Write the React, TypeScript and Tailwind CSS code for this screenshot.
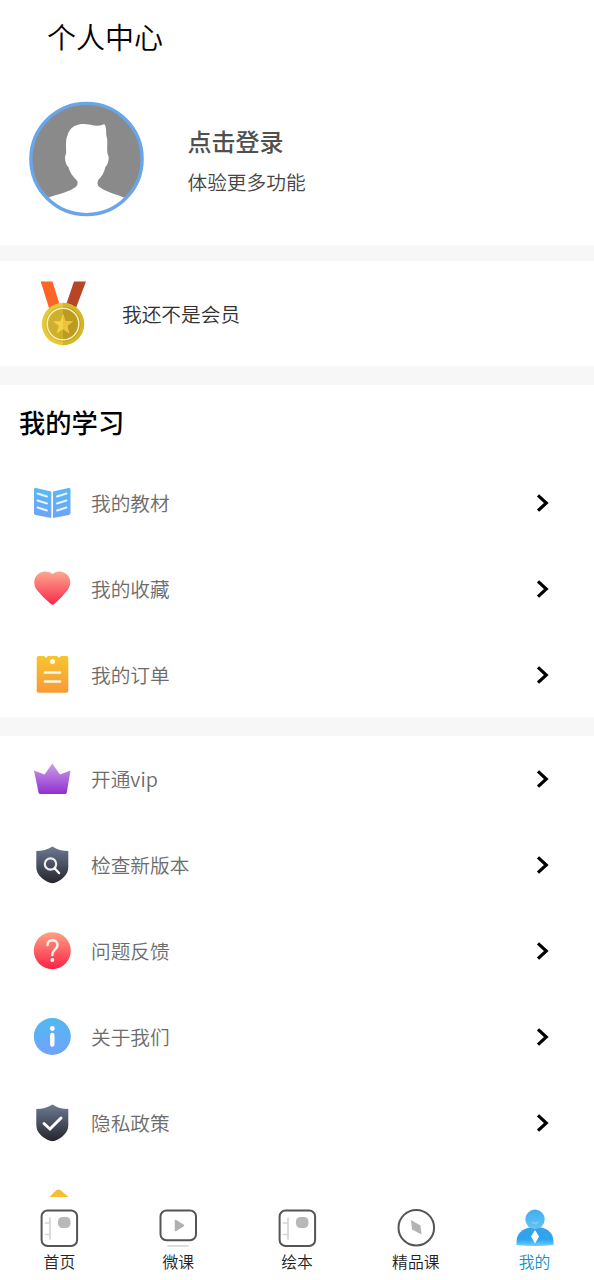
import React from 'react';

type IconComponent = React.FC;

interface MenuItem {
  label: string;
  icon: IconComponent;
}

interface TabItem extends MenuItem {
  active?: boolean;
}

const BookIcon: IconComponent = () => (
  <svg className="h-10 w-10" viewBox="0 0 40 40" fill="none">
    <defs>
      <linearGradient id="book" x1="0" y1="5" x2="0" y2="35" gradientUnits="userSpaceOnUse">
        <stop stopColor="#59b9f2" />
        <stop offset="1" stopColor="#6ea3f8" />
      </linearGradient>
    </defs>
    <path d="M2 6.500Q2 4.500 4 5L19.300 8.500V35L3.500 32Q2 31.600 2 30ZM21 8.500L36.500 5Q38.500 4.500 38.500 6.500V30Q38.500 31.600 37 32L21 35Z" fill="url(#book)" />
    <path d="M5.500 10.500l9.500 3M5.500 17.500l9.500 3M5.500 24.500l9.500 3M25 13.500l9.500-3M25 20.500l9.500-3M25 27.500l9.500-3" stroke="#fff" strokeOpacity=".85" strokeWidth="1.900" strokeLinecap="round" />
  </svg>
);

const HeartIcon: IconComponent = () => (
  <svg className="h-10 w-10" viewBox="0 0 40 40">
    <defs>
      <linearGradient id="heart" x1="0" y1="3" x2="0" y2="36" gradientUnits="userSpaceOnUse">
        <stop stopColor="#fba78f" />
        <stop offset="1" stopColor="#fb2649" />
      </linearGradient>
    </defs>
    <path d="M20.500 5C25 1.200 31.500 1.800 35.500 6C39.500 10.500 39 17 35 21.800Q30 28.500 22.500 34.800Q20.500 36.500 18.500 34.800Q11 28.500 5.500 21.800C1.500 17 1 10.500 5 6C9 1.800 16 1.200 20.500 5Z" fill="url(#heart)" />
  </svg>
);

const OrderIcon: IconComponent = () => (
  <svg className="h-10 w-10" viewBox="0 0 40 40" fill="none">
    <defs>
      <linearGradient id="order" x1="0" y1="1" x2="0" y2="38" gradientUnits="userSpaceOnUse">
        <stop stopColor="#f7c52e" />
        <stop offset="1" stopColor="#f79938" />
      </linearGradient>
    </defs>
    <path d="M6.500 1H12.500Q12.500 2.600 14 2.600T15.500 1H25.500Q25.500 2.600 27 2.600T28.500 1H34.500Q36.300 1 36.300 2.500V36Q36.300 37.700 34.500 37.700H6.500Q4.700 37.700 4.700 36V2.500Q4.700 1 6.500 1Z" fill="url(#order)" />
    <circle cx="20.500" cy="6.500" r="2.500" fill="#fff" fillOpacity=".9" />
    <path d="M13 17.500h15M13 26.500h15" stroke="#fff" strokeOpacity=".9" strokeWidth="2.700" strokeLinecap="round" />
  </svg>
);

const CrownIcon: IconComponent = () => (
  <svg className="h-10 w-10" viewBox="0 0 40 40">
    <defs>
      <linearGradient id="crown" x1="0" y1="5" x2="0" y2="35" gradientUnits="userSpaceOnUse">
        <stop stopColor="#cb9de6" />
        <stop offset="1" stopColor="#8f2fd0" />
      </linearGradient>
    </defs>
    <path d="M20.300 4.500L28 15.500L38.500 11.500L34.800 33.500Q34.500 35 33 35H8.500Q6.800 35 6.500 33.500L2 11.500L12.500 15.500Z" fill="url(#crown)" />
  </svg>
);

const ShieldShape: React.FC<{ id: string; children: React.ReactNode }> = ({ id, children }) => (
  <svg className="h-10 w-10" viewBox="0 0 40 40" fill="none">
    <defs>
      <linearGradient id={id} x1="0" y1="2" x2="0" y2="38" gradientUnits="userSpaceOnUse">
        <stop stopColor="#6c7991" />
        <stop offset="1" stopColor="#25262e" />
      </linearGradient>
    </defs>
    <path d="M20.500 1.500Q27 6 36.300 6V22.500C36.300 30 29 35.500 23 37.800Q20.500 38.500 18 37.800C11 35 4.300 30 4.300 22V6Q13 6 20.500 1.500Z" fill={`url(#${id})`} />
    {children}
  </svg>
);

const VersionIcon: IconComponent = () => (
  <ShieldShape id="shieldVersion">
    <circle cx="18.500" cy="19" r="5.700" stroke="#fff" strokeOpacity=".9" strokeWidth="2.200" />
    <path d="M22.800 23.500L27 28" stroke="#fff" strokeWidth="2.400" strokeLinecap="round" />
  </ShieldShape>
);

const PrivacyIcon: IconComponent = () => (
  <ShieldShape id="shieldPrivacy">
    <path d="M12 20.500L18 26L29 15" stroke="#fff" strokeWidth="3" strokeLinecap="round" />
  </ShieldShape>
);

const FeedbackIcon: IconComponent = () => (
  <svg className="h-10 w-10" viewBox="0 0 40 40" fill="none">
    <defs>
      <linearGradient id="feedback" x1="0" y1="1" x2="0" y2="38" gradientUnits="userSpaceOnUse">
        <stop stopColor="#fda384" />
        <stop offset="1" stopColor="#fc2247" />
      </linearGradient>
    </defs>
    <circle cx="20.300" cy="19.700" r="18.500" fill="url(#feedback)" />
    <path d="M15.500 14C15.500 7.800 25.500 7.800 25.500 14C25.500 18.500 20.300 18.500 20.300 24" stroke="#fff" strokeOpacity=".9" strokeWidth="2.500" strokeLinecap="round" />
    <circle cx="20.300" cy="29" r="1.900" fill="#fff" />
  </svg>
);

const AboutIcon: IconComponent = () => (
  <svg className="h-10 w-10" viewBox="0 0 40 40" fill="none">
    <defs>
      <linearGradient id="about" x1="0" y1="1" x2="0" y2="38" gradientUnits="userSpaceOnUse">
        <stop stopColor="#50b9f0" />
        <stop offset="1" stopColor="#71a2fb" />
      </linearGradient>
    </defs>
    <circle cx="20.300" cy="19.500" r="18.500" fill="url(#about)" />
    <circle cx="20.300" cy="11.500" r="2.400" fill="#fff" />
    <path d="M20.300 18V27.500" stroke="#fff" strokeWidth="4.400" strokeLinecap="round" />
  </svg>
);

const Avatar: IconComponent = () => (
  <svg className="h-[116px] w-[116px]" viewBox="0 0 116 116">
    <defs>
      <clipPath id="avatarClip">
        <circle cx="58.500" cy="58" r="56" />
      </clipPath>
    </defs>
    <g clipPath="url(#avatarClip)">
      <rect width="116" height="116" fill="#8a8a8a" />
      <path d="M51 23.500C60 21.500 66 26.500 74 24C75.500 23.300 76.500 22.500 77 24C79 29 77.500 33 79 37C79.800 42 78.500 49 79.700 53.500C82 56 80 64 77.300 66C76.500 71 73.500 76 70.500 78.500C68 83 70.500 86 73 87C80 92 89 93 97 97V116H19V97C29 93 39 92 46 87C49 86 51 82 48.500 79C45 76 41 70 40.500 66C37.500 64 36 56 38 53C38.500 47 37 39 39.700 34C41 29 44 25 51 23.500Z" fill="#fff" />
    </g>
    <circle cx="58.500" cy="58" r="55.600" fill="none" stroke="#6aa5ea" strokeWidth="3.400" />
  </svg>
);

const Medal: IconComponent = () => (
  <svg className="h-[68px] w-[50px]" viewBox="0 0 50 68">
    <path d="M2.700 1.500H14.500L22 26L11 28Z" fill="#fc6528" />
    <path d="M36 1.500H48L38 28L28 25Z" fill="#b74627" />
    <circle cx="25" cy="44" r="21.200" fill="#e8c935" />
    <path d="M25 22.800A21.200 21.200 0 0 1 25 65.200Z" fill="#d5b52a" />
    <circle cx="25" cy="44" r="17.500" fill="#cfb02c" />
    <path d="M25 26.500A17.500 17.500 0 0 1 25 61.500Z" fill="#bb9c21" />
    <circle cx="25" cy="44" r="15.800" fill="none" stroke="#f6efbd" strokeWidth="1.500" />
    <path d="M25 34L27.600 41.300H35L29.200 46L31.400 53.500L25 49L18.600 53.500L20.800 46L15 41.300H22.400Z" fill="#f7d246" />
    <path d="M25 34L27.600 41.300H35L29.200 46L31.400 53.500L25 49Z" fill="#ebc341" />
  </svg>
);

const NotebookTabIcon: IconComponent = () => (
  <svg className="h-10 w-10" viewBox="0 0 40 40" fill="none">
    <rect x="2.600" y="2.500" width="35.500" height="35.500" rx="6" stroke="#555" strokeWidth="2" />
    <path d="M11 10V31M6.500 15H11M6.500 26.500H11" stroke="#d5d5d5" strokeWidth="1.700" strokeLinecap="round" />
    <rect x="19" y="9" width="12.500" height="11" rx="4.500" fill="#b8b8b8" />
  </svg>
);

const VideoTabIcon: IconComponent = () => (
  <svg className="h-10 w-10" viewBox="0 0 40 40" fill="none">
    <rect x="2.500" y="2.500" width="35.500" height="29.800" rx="6" stroke="#555" strokeWidth="2" />
    <path d="M17.500 12.500V22.500L25.500 17.500Z" fill="#b0b0b0" stroke="#b0b0b0" strokeWidth="1.500" strokeLinejoin="round" />
    <path d="M10 38H30" stroke="#d2d2d2" strokeWidth="1.500" strokeLinecap="round" />
  </svg>
);

const CompassTabIcon: IconComponent = () => (
  <svg className="h-10 w-10" viewBox="0 0 40 40" fill="none">
    <circle cx="20.300" cy="19.700" r="17.800" stroke="#555" strokeWidth="2" />
    <path d="M15 12L24.500 17.500L25.500 26.500L16 21.500Z" fill="#b4b4b4" />
  </svg>
);

const MineTabIcon: IconComponent = () => (
  <svg className="h-10 w-10" viewBox="0 0 40 40" fill="none">
    <defs>
      <linearGradient id="mineHead" x1="0" y1="2" x2="0" y2="20" gradientUnits="userSpaceOnUse">
        <stop stopColor="#43b0ed" />
        <stop offset="1" stopColor="#63c1f6" />
      </linearGradient>
      <linearGradient id="mineBody" x1="0" y1="19" x2="0" y2="38" gradientUnits="userSpaceOnUse">
        <stop stopColor="#3b9fe6" />
        <stop offset=".65" stopColor="#2aa6f4" />
        <stop offset="1" stopColor="#73cbfb" />
      </linearGradient>
    </defs>
    <path d="M1.500 37V33C2 23 11 19 20.500 19S38 23 38.500 33V37Q20 39 1.500 37Z" fill="url(#mineBody)" />
    <circle cx="20" cy="11.300" r="9.700" fill="url(#mineHead)" />
    <path d="M17 14.500Q20 16 23 14.500" stroke="#9fdafa" />
    <path d="M20 22L24 28.500L20 35.500L16 28.500Z" fill="#fff" />
  </svg>
);

const CHEVRON = (
  <svg className="h-5 w-4" viewBox="0 0 16 20" fill="none">
    <path d="M3 2.300L11.300 10L3 17.700" stroke="#000" strokeWidth="3.200" />
  </svg>
);

const learningItems: MenuItem[] = [
  { label: '我的教材', icon: BookIcon },
  { label: '我的收藏', icon: HeartIcon },
  { label: '我的订单', icon: OrderIcon },
];

const serviceItems: MenuItem[] = [
  { label: '开通vip', icon: CrownIcon },
  { label: '检查新版本', icon: VersionIcon },
  { label: '问题反馈', icon: FeedbackIcon },
  { label: '关于我们', icon: AboutIcon },
  { label: '隐私政策', icon: PrivacyIcon },
];

const tabs: TabItem[] = [
  { label: '首页', icon: NotebookTabIcon },
  { label: '微课', icon: VideoTabIcon },
  { label: '绘本', icon: NotebookTabIcon },
  { label: '精品课', icon: CompassTabIcon },
  { label: '我的', icon: MineTabIcon, active: true },
];

const MenuRow: React.FC<MenuItem> = ({ label, icon: Icon }) => (
  <button className="flex h-[85.900px] w-full shrink-0 items-center pr-[43px] pl-8 text-left">
    <Icon />
    <span className="ml-[19px] flex-1 pt-px text-[19.700px] leading-7 text-[#6c6c6c]">{label}</span>
    {CHEVRON}
  </button>
);

const Divider: React.FC<{ className: string }> = ({ className }) => (
  <div className={`shrink-0 bg-[#f7f7f7] ${className}`} />
);

export default function App() {
  return (
    <div className="flex h-[1280px] w-[594px] flex-col overflow-hidden bg-white font-['Noto_Sans_CJK_SC',sans-serif] font-[350]">
      <main className="flex h-[1197px] shrink-0 flex-col overflow-hidden">
        <header className="flex h-[76px] shrink-0 items-start pt-4 pl-[47px]">
          <h1 className="text-[29px] leading-10 font-[350] text-black">个人中心</h1>
        </header>

        <section className="flex h-[169px] shrink-0 items-start pt-[25px] pl-7">
          <Avatar />
          <div className="ml-[43.500px] pt-6">
            <p className="text-[24px] leading-8 font-medium text-[#505050]">点击登录</p>
            <p className="mt-[11px] text-[19.700px] leading-7 text-[#454545]">体验更多功能</p>
          </div>
        </section>

        <Divider className="h-4" />
        <section className="flex h-[105px] shrink-0 items-center pl-[38px]">
          <Medal />
          <span className="ml-[34px] text-[19.700px] leading-7 text-[#303030]">我还不是会员</span>
        </section>

        <Divider className="h-[19px]" />
        <section className="flex h-[332px] shrink-0 flex-col">
          <h2 className="h-[75px] shrink-0 pt-[17px] pl-[19px] text-[26.300px] leading-10 font-medium text-black">我的学习</h2>
          {learningItems.map((item) => (
            <MenuRow key={item.label} {...item} />
          ))}
        </section>

        <Divider className="h-[19px]" />
        <section className="flex flex-col">
          {serviceItems.map((item) => (
            <MenuRow key={item.label} {...item} />
          ))}
          <div className="flex h-[86px] shrink-0 items-start pt-[23px] pl-8">
            <svg className="h-10 w-[54px]" viewBox="0 0 54 40">
              <path d="M18 8.500L24 2.500Q26.500 .500 29 2.500L36 8.500L48 20H6Z" fill="#f6bd35" />
            </svg>
          </div>
        </section>
      </main>

      <nav className="flex h-[83px] shrink-0 bg-white pt-[11px]">
        {tabs.map(({ label, icon: Icon, active }) => (
          <button key={label} className="flex flex-1 flex-col items-center">
            <Icon />
            <span className={`mt-0.5 text-[15.800px] leading-6 ${active ? 'text-[#1291c4]' : 'text-[#222]'}`}>{label}</span>
          </button>
        ))}
      </nav>
    </div>
  );
}
